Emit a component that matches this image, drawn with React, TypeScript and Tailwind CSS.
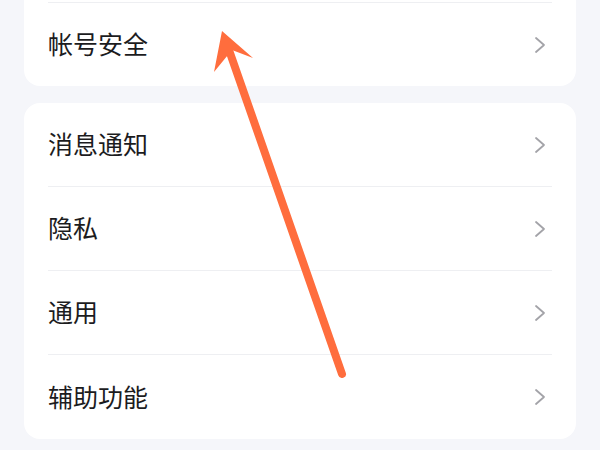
const GROUP = ['消息通知', '隐私', '通用', '辅助功能'];

function Chevron() {
  return (
    <svg width="12" height="18" viewBox="0 0 12 18" className="mr-[6px]">
      <polyline
        points="2,2 10,9 2,16"
        fill="none"
        stroke="#a3a3a8"
        strokeWidth="1.8"
        strokeLinecap="round"
        strokeLinejoin="round"
      />
    </svg>
  );
}

function Row({ label, last }: { label: string; last?: boolean }) {
  return (
    <div className="px-6">
      <div
        className={`flex items-center justify-between h-[84px] ${last ? '' : 'border-b border-[#eeeff2]'}`}
      >
        <span className="text-[25px] text-[#1c1c1e] leading-none mt-[-2px]">{label}</span>
        <Chevron />
      </div>
    </div>
  );
}

export default function App() {
  return (
    <div
      className="relative w-[600px] h-[450px] overflow-hidden bg-[#f5f6fa]"
      style={{ fontFamily: '"Noto Sans CJK SC", "Noto Sans", sans-serif' }}
    >
      <div className="flex flex-col gap-[17px] px-6">
        {/* account card, mostly scrolled off the top */}
        <div className="bg-white rounded-b-2xl pt-[2px]">
          <div className="mx-6 border-t border-[#eeeff2]" />
          <div className="px-6">
            <div className="flex items-center justify-between h-[83px]">
              <span className="text-[25px] text-[#1c1c1e] leading-none mt-[-2px]">帐号安全</span>
              <Chevron />
            </div>
          </div>
        </div>

        <div className="bg-white rounded-2xl">
          {GROUP.map((g, i) => (
            <Row key={g} label={g} last={i === GROUP.length - 1} />
          ))}
        </div>
      </div>

      {/* annotation arrow */}
      <svg className="absolute left-0 top-0 pointer-events-none" width="600" height="450" viewBox="0 0 600 450">
        <line x1="342" y1="374" x2="229" y2="50" stroke="#ff6d3d" strokeWidth="8" strokeLinecap="round" />
        <polygon points="222,31 253,58 232,50 214,72" fill="#ff6d3d" />
      </svg>
    </div>
  );
}
